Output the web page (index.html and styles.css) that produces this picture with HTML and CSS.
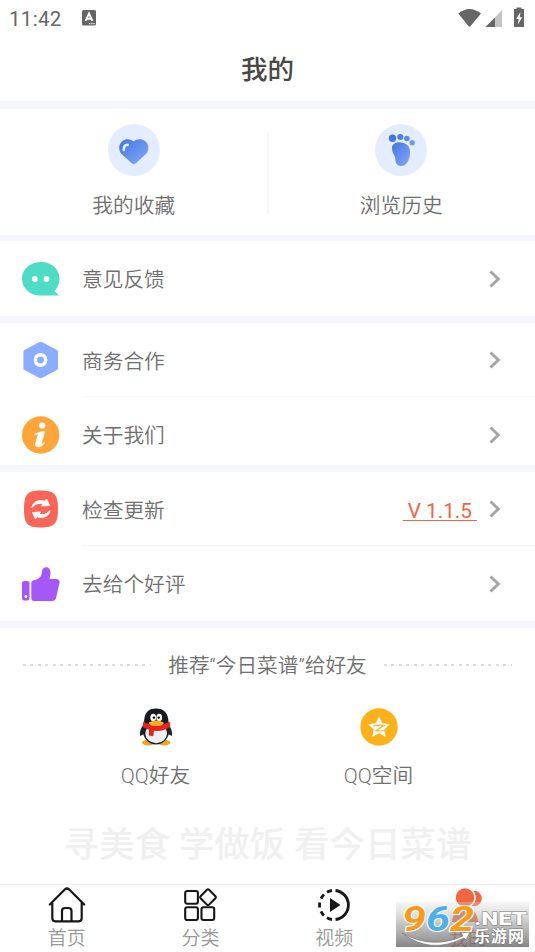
FILE: index.html
```html
<!DOCTYPE html>
<html lang="zh-CN">
<head>
<meta charset="utf-8">
<title>我的</title>
<link rel="stylesheet" href="styles.css">
</head>
<body>
<div class="app">
  <div class="status">
    <span class="clock">11:42</span>
    <svg class="ime" width="14" height="16" viewBox="0 0 14 16"><rect width="14" height="15.5" rx="1.5" fill="#666"/><path d="M3.6 10.8 7 3.5l3.4 7.3M5 8.8h4" fill="none" stroke="#fff" stroke-width="1.9"/><path d="M7 13.7h6" stroke="#fff" stroke-width="1.2" stroke-dasharray="1.2 1"/></svg>
    <svg class="signals" width="68" height="21" viewBox="0 0 68 21"><path d="M.3 6.5Q11.5-2.500 23 6.500L12.600 19q-1.100 1-2.200 0Z" fill="#666"/><path d="M44 3v17H28Z" fill="#c4c4c4"/><path d="M37 10.500V20h-9.500Z" fill="#666"/><path d="M56 2h2.500V.5h5V2H66v18H56V2Z" fill="#666"/><path d="m62.500 5-4.300 7h2.500l-.8 5.500 4.300-7.300h-2.500Z" fill="#fff"/></svg>
  </div>
  <header class="title">我的</header>
  <section class="shortcuts">
    <div class="shortcut">
      <svg width="52" height="52" viewBox="0 0 52 52"><defs><linearGradient id="blue" x1="0" y1="0" x2="1" y2="1"><stop stop-color="#4376df"/><stop offset="1" stop-color="#86a8fb"/></linearGradient></defs><circle cx="26" cy="26" r="26" fill="#e4ecff"/><path d="M23.500 39 13.500 30C6.500 21 17 10.500 25.500 17.500 34 10.500 45 20.500 38.500 29.500L28 39q-2.200 1.800-4.500 0Z" fill="url(#blue)"/><path d="M15.800 26c-.2-3 1.500-5 4-5.200" fill="none" stroke="#e4ecff" stroke-width="2.600" stroke-linecap="round"/></svg>
      <span>我的收藏</span>
    </div>
    <i class="split"></i>
    <div class="shortcut">
      <svg width="52" height="52" viewBox="0 0 52 52"><circle cx="26" cy="26" r="26" fill="#e4ecff"/><circle cx="17.500" cy="14.200" r="3.700" fill="#4577df"/><circle cx="25.300" cy="13" r="3" fill="#4c7de5"/><circle cx="31.800" cy="14.500" r="2.800" fill="#5c89eb"/><circle cx="37.200" cy="18.800" r="2.700" fill="#7199f2"/><path d="M17 24c0-8 17-8 18 3 .5 7-2.500 15-9 15-3 0-5-1.800-5.500-5 .3-6-3.500-7-3.500-13Z" fill="url(#blue)"/></svg>
      <span>浏览历史</span>
    </div>
  </section>
  <section class="group">
    <div class="row">
      <svg class="icon" viewBox="0 0 38 38"><path d="M19 2C8.500 2 0 9 0 18.500S8 35.500 18 35.500h19L32.500 31C35.500 28 37.500 23.500 37.500 18.500 37.500 9 29.500 2 19 2Z" fill="#4fdcc6"/><circle cx="12.800" cy="19" r="2.900" fill="#fff"/><circle cx="24.500" cy="19" r="2.900" fill="#fff"/></svg>
      <span class="label">意见反馈</span>
      <svg class="chevron" viewBox="0 0 12 18"><path d="m1.500 1.500 7.800 7.500-7.800 7.500"/></svg>
    </div>
  </section>
  <section class="group about">
    <div class="row">
      <svg class="icon" viewBox="0 0 38 38"><path d="M17.500 1q1.200-.7 2.400 0l15 8q1.100.6 1.100 1.800v16.400q0 1.200-1.100 1.800l-15 8q-1.200.7-2.400 0l-15-8q-1.100-.6-1.100-1.800V10.800q0-1.200 1.100-1.800Z" fill="#8badff"/><circle cx="18.500" cy="19" r="5.200" fill="none" stroke="#fff" stroke-width="3.500"/></svg>
      <span class="label">商务合作</span>
      <svg class="chevron" viewBox="0 0 12 18"><path d="m1.500 1.500 7.800 7.500-7.800 7.500"/></svg>
    </div>
    <div class="row">
      <svg class="icon" viewBox="0 0 38 38"><circle cx="18.700" cy="19" r="18.700" fill="#ffa53a"/><circle cx="20.200" cy="9.500" r="3.100" fill="#fff"/><path d="M12.500 18q4-1.800 9.500-2.800l.8.600L19.500 27q-.3 1.500 1 .8l2-1.300q-1.300 3.500-5.300 4.500-4.500.4-3.700-3.500l2.400-8.200q.2-1.500-3.400-.8Z" fill="#fff" stroke="#fff" stroke-width=".5"/></svg>
      <span class="label">关于我们</span>
      <svg class="chevron" viewBox="0 0 12 18"><path d="m1.500 1.500 7.800 7.500-7.800 7.500"/></svg>
    </div>
  </section>
  <section class="group">
    <div class="row">
      <svg class="icon" viewBox="0 0 38 38"><path d="M18.700.5C32 .5 36 4 36 19S32 37.500 18.700 37.500 2 34 2 19 5.500.5 18.700.5Z" fill="#f96556"/><path d="M10 17.500c.5-5.500 7-8.500 13-6.200l1.500-2.300 3 6.500-8 .5 1.500-2.200c-4-1.200-8.500.2-11 3.700ZM28 20.500c-.5 5.500-7 8.500-13 6.200L13.500 29l-3-6.500 8-.5-1.500 2.200c4 1.200 8.500-.2 11-3.700Z" fill="#fff" stroke="#fff" stroke-width="1" stroke-linejoin="round"/></svg>
      <span class="label">检查更新</span>
      <span class="version">&nbsp;V 1.1.5&nbsp;</span>
      <svg class="chevron" viewBox="0 0 12 18"><path d="m1.500 1.500 7.800 7.500-7.800 7.500"/></svg>
    </div>
    <div class="row">
      <svg class="icon" viewBox="0 0 38 38"><rect y="16" width="7.500" height="19.500" rx="2.200" fill="#a657f8"/><circle cx="3.900" cy="31.500" r="1.400" fill="#fff"/><path d="M9.300 18q0-2.500 2.500-2.800C18 14 19.500 11 20 6.500 20.500 1 28.500.5 28.500 8c0 3-.7 4.500-1.200 6H34q4 .2 3.500 4l-3.300 14.500Q33.500 36 30 36H12q-2.700 0-2.700-2.700Z" fill="#a657f8"/></svg>
      <span class="label">去给个好评</span>
      <svg class="chevron" viewBox="0 0 12 18"><path d="m1.500 1.500 7.800 7.500-7.800 7.500"/></svg>
    </div>
  </section>
  <section class="share">
    <div class="heading"><i class="dots"></i><span>推荐“今日菜谱”给好友</span><i class="dots"></i></div>
    <div class="friends">
      <div class="friend">
        <svg width="38" height="38" viewBox="0 0 38 38"><path d="M7 16q-5 6-4 12l4-2ZM31 16q5 6 4 12l-4-2Z" fill="#20242b"/><ellipse cx="11.500" cy="34.500" rx="6.300" ry="3" fill="#f6a31a"/><ellipse cx="27" cy="34.500" rx="6.300" ry="3" fill="#f6a31a"/><ellipse cx="19" cy="23" rx="13" ry="13.500" fill="#1b2028"/><path d="M7 15C7 5 11 .5 19 .5S31.500 5 31.500 15Z" fill="#171a22"/><ellipse cx="19.200" cy="25.500" rx="10.800" ry="9.700" fill="#edf1f3"/><path d="M6.200 13.500q13 8 26.500 0l.6 5.500q-13 8-27.500 0Z" fill="#e7231b"/><path d="m12 21 5 1-.7 6.300-4.300-.8Z" fill="#dc261d"/><ellipse cx="16.200" cy="9.500" rx="2.900" ry="3.800" fill="#fff"/><ellipse cx="22.200" cy="9.500" rx="2.900" ry="3.800" fill="#fff"/><circle cx="17" cy="9.600" r="1.200"/><circle cx="21.700" cy="9.600" r="1.200"/><ellipse cx="19.300" cy="15.300" rx="7.500" ry="2.700" fill="#f7ae22"/></svg>
        <span>QQ好友</span>
      </div>
      <div class="friend">
        <svg width="38" height="38" viewBox="0 0 38 38"><circle cx="19" cy="19" r="18.700" fill="#fbb21a"/><path d="m19 8.500 3.300 6.700 7.500 1-5.400 5.300 1.300 7.400L19 25.300l-6.700 3.600 1.300-7.400-5.400-5.300 7.500-1Z" fill="#fff"/><path d="M13 18q6-1.200 11-.7l-8 5.400q5 .8 10.500-.4" fill="none" stroke="#fbb21a" stroke-width="1.100"/></svg>
        <span>QQ空间</span>
      </div>
    </div>
    <div class="slogan">寻美食 学做饭 看今日菜谱</div>
  </section>
  <nav class="tabs">
    <div class="tab">
      <svg width="38" height="38" viewBox="0 0 38 38"><g fill="none" stroke="#171717" stroke-width="2.200" stroke-linecap="round" stroke-linejoin="round"><path d="m1.800 18.500 15-15q2.200-2 4.400 0l15 15M4.300 17v15q0 3.300 3 3.300h23.400q3 0 3-3.300V17"/><path d="M14 35V25q0-3 3-3h3.500q3 0 3 3v10"/></g></svg>
      <span>首页</span>
    </div>
    <div class="tab">
      <svg width="38" height="38" viewBox="0 0 38 38"><g fill="none" stroke="#171717" stroke-width="2.100"><rect x="3.200" y="5" width="12.700" height="12.700" rx="2"/><rect x="3.200" y="21.300" width="12.700" height="12.700" rx="2"/><rect x="19.500" y="21.300" width="12.700" height="12.700" rx="2"/><rect x="20" y="5.200" width="12" height="12" rx="1.500" transform="rotate(45 26 11.200)"/></g></svg>
      <span>分类</span>
    </div>
    <div class="tab">
      <svg width="38" height="38" viewBox="0 0 38 38"><path d="M20.500 4.500a14.600 14.600 0 0 1 0 29M17 4.500a14.600 14.600 0 0 0-5 1.800M9 8.400a14.600 14.600 0 0 0-3 4.300M4.700 16.500a14.600 14.600 0 0 0 0 5M6 25.300a14.600 14.600 0 0 0 3 4.300M12 31.700a14.600 14.600 0 0 0 5 1.800" fill="none" stroke="#171717" stroke-width="2.800"/><path d="m15 12 10.500 7L15 26Z" fill="#171717"/></svg>
      <span>视频</span>
    </div>
    <div class="tab active">
      <svg width="38" height="38" viewBox="0 0 38 38"><circle cx="25" cy="12.500" r="7.800" fill="#f26641"/><circle cx="16" cy="11.500" r="10" fill="#f26641" stroke="#fff" stroke-width="1.500"/><path d="M3 36q1-14 13-14t13 14Z" fill="#f26641"/></svg>
      <span>我的</span>
    </div>
    <svg class="badge" width="133" height="45" viewBox="0 0 133 45">
      <defs><linearGradient id="shade" x1="0" y1="0" x2="0" y2="1"><stop stop-color="#ddd" stop-opacity=".3"/><stop offset=".5" stop-color="#999" stop-opacity=".6"/><stop offset="1" stop-color="#666" stop-opacity=".8"/></linearGradient></defs>
      <rect width="133" height="45" fill="url(#shade)"/>
      <path d="M6 31q30 17 61 3l-2-3 9-1-4 8-2-2Q34 53 6 31Z" fill="#fff" stroke="#777" stroke-width=".7"/>
      <g class="digits"><text x="6" y="28.500" textLength="24" lengthAdjust="spacingAndGlyphs" fill="#f79a20">9</text><text x="30" y="28.500" textLength="24" lengthAdjust="spacingAndGlyphs" fill="#4eb0ea">6</text><text x="54" y="28.500" textLength="24" lengthAdjust="spacingAndGlyphs" fill="#f79a20">2</text></g>
      <text class="net" x="78" y="22.500" textLength="53" lengthAdjust="spacingAndGlyphs">.NET</text>
      <text class="site" x="78" y="40" textLength="50">乐游网</text>
    </svg>
  </nav>
</div>
</body>
</html>
```
FILE: styles.css
```css
* { box-sizing: border-box; }
body { margin: 0; background: #fff; color: #6f6f6f; font: 350 20.7px/30px Roboto, "Noto Sans CJK SC", sans-serif; }
svg { display: block; flex: none; }
.app { width: 535px; height: 952px; display: flex; flex-direction: column; overflow: hidden; }
.status { height: 38px; display: flex; align-items: center; padding: 0 9px; flex: none; color: #666; font-weight: 400; }
.clock { font-size: 20.5px; letter-spacing: .3px; width: 73px; }
.ime { margin-top: -2px; }
.signals { margin: -4px 0 0 auto; }
.title { height: 63px; flex: none; text-align: center; font-size: 26.5px; line-height: 63px; font-weight: 500; color: #484848; }
.shortcuts { height: 140px; flex: none; display: flex; align-items: center; padding: 0 1px; border-top: 8px solid #f5f6fe; border-bottom: 6px solid #f5f6fe; }
.shortcut { flex: 1; height: 100%; display: flex; flex-direction: column; align-items: center; gap: 15px; padding-top: 15px; }
.split { width: 2px; height: 81px; background: #f5f6fe; }
.group { flex: none; border-bottom: 7px solid #f5f6fe; }
.row { height: 74.5px; display: flex; align-items: center; padding: 1px 34px 0 22px; position: relative; }
.row + .row::before { content: ""; position: absolute; left: 82px; right: 0; top: -1px; height: 1px; background: #f5f6fa; }
.about { height: 149px; }
.icon { width: 38px; height: 38px; margin-right: 22px; }
.label { flex: 1; padding-top: 3px; }
.chevron { width: 12px; height: 18px; fill: none; stroke: #a6a6a6; stroke-width: 3; }
.version { padding-top: 3px; color: #f26641; font-weight: 400; text-decoration: underline; text-decoration-thickness: 1px; text-underline-offset: 2px; margin-right: 12px; }
.share { flex: 1; padding-top: 22px; }
.heading { display: flex; align-items: center; justify-content: space-between; padding: 0 23px; }
.heading span { position: relative; top: 1px; }
.dots { width: 128px; height: 2px; background: repeating-linear-gradient(90deg, #ddd 0 3px, transparent 3px 7.45px); }
.friends { display: flex; padding: 28px 44px 0; }
.friend { width: 223px; display: flex; flex-direction: column; align-items: center; gap: 15px; }
.slogan { margin-top: 29px; text-align: center; color: #f0f0f0; font-size: 35.5px; line-height: 50px; font-weight: 500; }
.tabs { height: 68px; flex: none; display: flex; position: relative; border-top: 1px solid #eee; }
.tab { flex: 1; display: flex; flex-direction: column; align-items: center; gap: 3px; padding-top: 1px; color: #999; font-size: 19px; line-height: 24px; }
.active { color: #f26641; }
.badge { position: absolute; left: 396px; top: 17px; overflow: visible; }
.digits { font: italic 700 35px Roboto, sans-serif; stroke: #fff; stroke-width: 2px; paint-order: stroke; }
.net { font: 900 19px Roboto, sans-serif; fill: #fff; stroke: #777; stroke-width: 1px; paint-order: stroke; }
.site { font: 700 16px "Noto Sans CJK SC", sans-serif; fill: #fff; stroke: #777; stroke-width: 1px; paint-order: stroke; }
```
